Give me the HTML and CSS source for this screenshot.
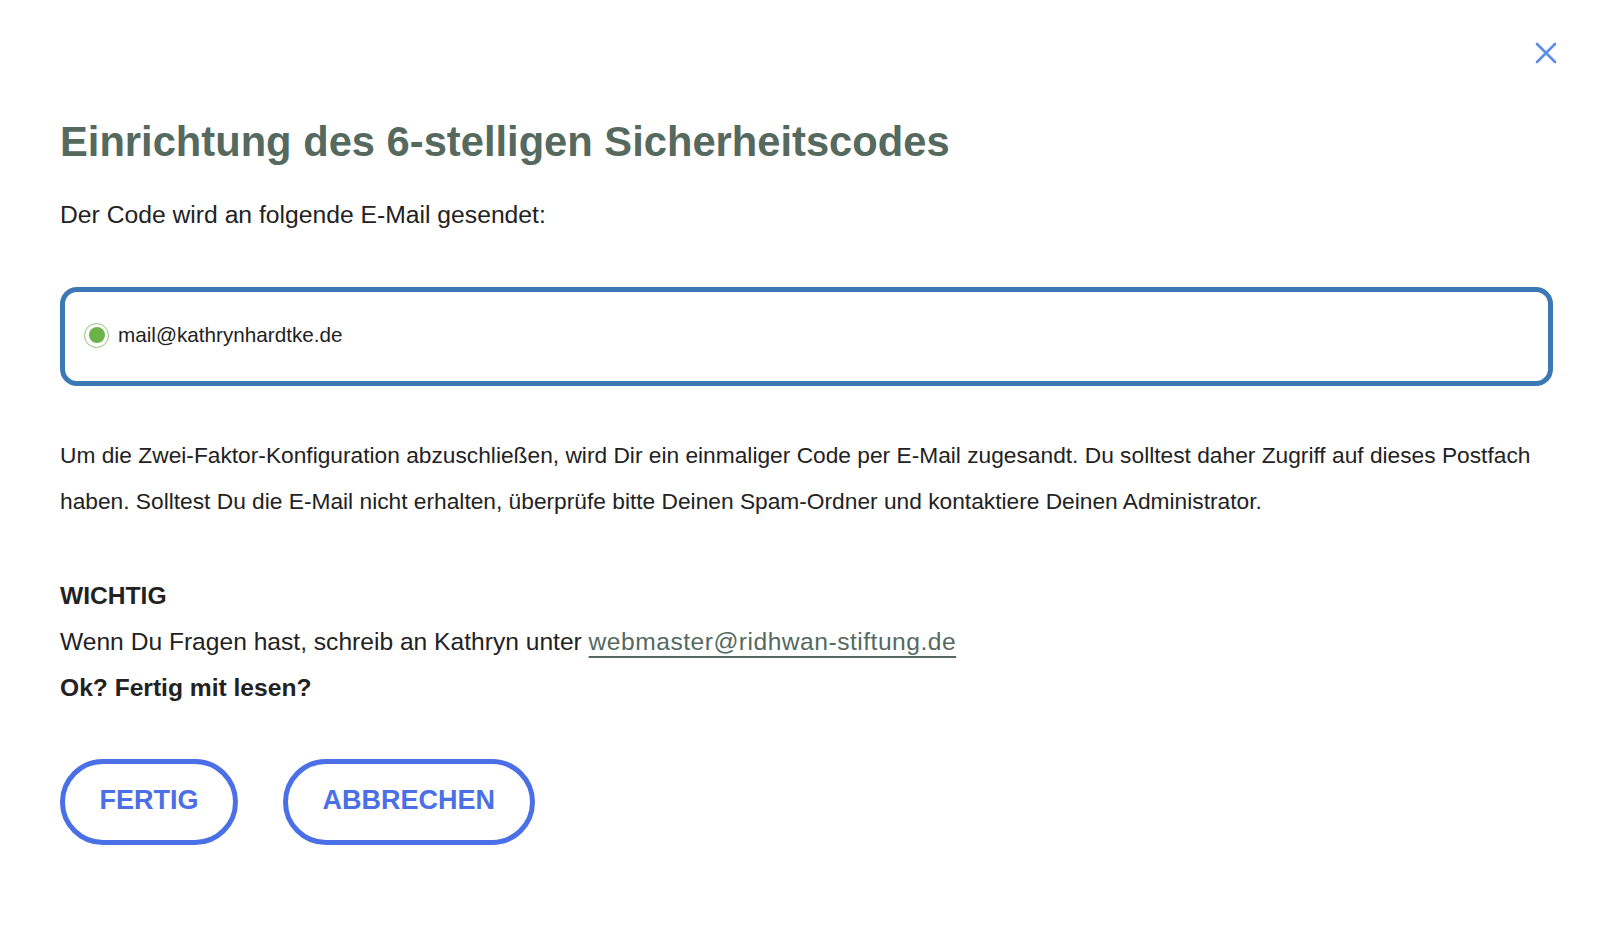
FILE: index.html
```html
<!DOCTYPE html>
<html lang="de">
<head>
<meta charset="utf-8">
<title>Einrichtung des 6-stelligen Sicherheitscodes</title>
<link rel="stylesheet" href="styles.css">
</head>
<body>
<div class="dialog">
  <button class="close" aria-label="Schließen">
    <svg width="22" height="22" viewBox="0 0 22 22"><path d="M2 2 L20 20 M20 2 L2 20" stroke="#5a8ee8" stroke-width="2.6" stroke-linecap="round" fill="none"/></svg>
  </button>
  <h1 class="title">Einrichtung des 6-stelligen Sicherheitscodes</h1>
  <p class="lead">Der Code wird an folgende E-Mail gesendet:</p>
  <div class="email-box">
    <span class="radio"><span class="radio-dot"></span></span>
    <span class="email">mail@kathrynhardtke.de</span>
  </div>
  <p class="info">Um die Zwei-Faktor-Konfiguration abzuschließen, wird Dir ein einmaliger Code per E-Mail zugesandt. Du solltest daher Zugriff auf dieses Postfach haben. Solltest Du die E-Mail nicht erhalten, überprüfe bitte Deinen Spam-Ordner und kontaktiere Deinen Administrator.</p>
  <div class="notice">
    <p class="strong">WICHTIG</p>
    <p>Wenn Du Fragen hast, schreib an Kathryn unter <a class="link" href="#">webmaster@ridhwan-stiftung.de</a></p>
    <p class="strong">Ok? Fertig mit lesen?</p>
  </div>
  <div class="actions">
    <button class="btn">FERTIG</button>
    <button class="btn">ABBRECHEN</button>
  </div>
</div>
</body>
</html>
```

FILE: styles.css
```css
html, body {
  margin: 0;
  padding: 0;
  background: #ffffff;
}
body {
  font-family: "Liberation Sans", Arial, Helvetica, sans-serif;
  color: #222222;
}
.dialog {
  position: relative;
  padding: 118px 47px 0 60px;
}
.close {
  position: absolute;
  top: 42px;
  right: 43px;
  width: 22px;
  height: 22px;
  padding: 0;
  border: 0;
  background: none;
  cursor: pointer;
}
.close svg { display: block; }
.title {
  margin: 0;
  font-size: 41.7px;
  line-height: 48px;
  font-weight: 700;
  color: #55695f;
}
.lead {
  margin: 33px 0 0;
  font-size: 24.7px;
  line-height: 32px;
}
.email-box {
  margin-top: 56px;
  height: 86px;
  padding-bottom: 3px;
  border: 5px solid #3c79b4;
  border-radius: 17px;
  display: flex;
  align-items: center;
  padding-left: 19px;
  gap: 9px;
}
.radio {
  width: 25px;
  height: 25px;
  box-sizing: border-box;
  border: 1.5px solid #8cc47a;
  border-radius: 50%;
  display: flex;
  align-items: center;
  justify-content: center;
}
.radio-dot {
  width: 16px;
  height: 16px;
  border-radius: 50%;
  background: #6cb24a;
}
.email {
  font-size: 20.7px;
  color: #222;
}
.info {
  margin: 46px 0 0;
  font-size: 22.74px;
  line-height: 46px;
}
.notice {
  margin-top: 49px;
}
.notice p {
  margin: 0;
  font-size: 24.6px;
  line-height: 46px;
}
.notice .strong { font-weight: 700; }
.link {
  color: #55695f;
  letter-spacing: 0.5px;
  text-decoration: underline;
  text-decoration-thickness: 2px;
  text-underline-offset: 6px;
}
.actions {
  margin-top: 48px;
  display: flex;
  gap: 45px;
}
.btn {
  height: 86px;
  padding: 0 34.5px 3px;
  border: 5px solid #4a6fe6;
  border-radius: 43px;
  background: #fff;
  color: #4a6fe6;
  font-family: "Liberation Sans", Arial, Helvetica, sans-serif;
  font-size: 27px;
  font-weight: 700;
  cursor: pointer;
}
```
